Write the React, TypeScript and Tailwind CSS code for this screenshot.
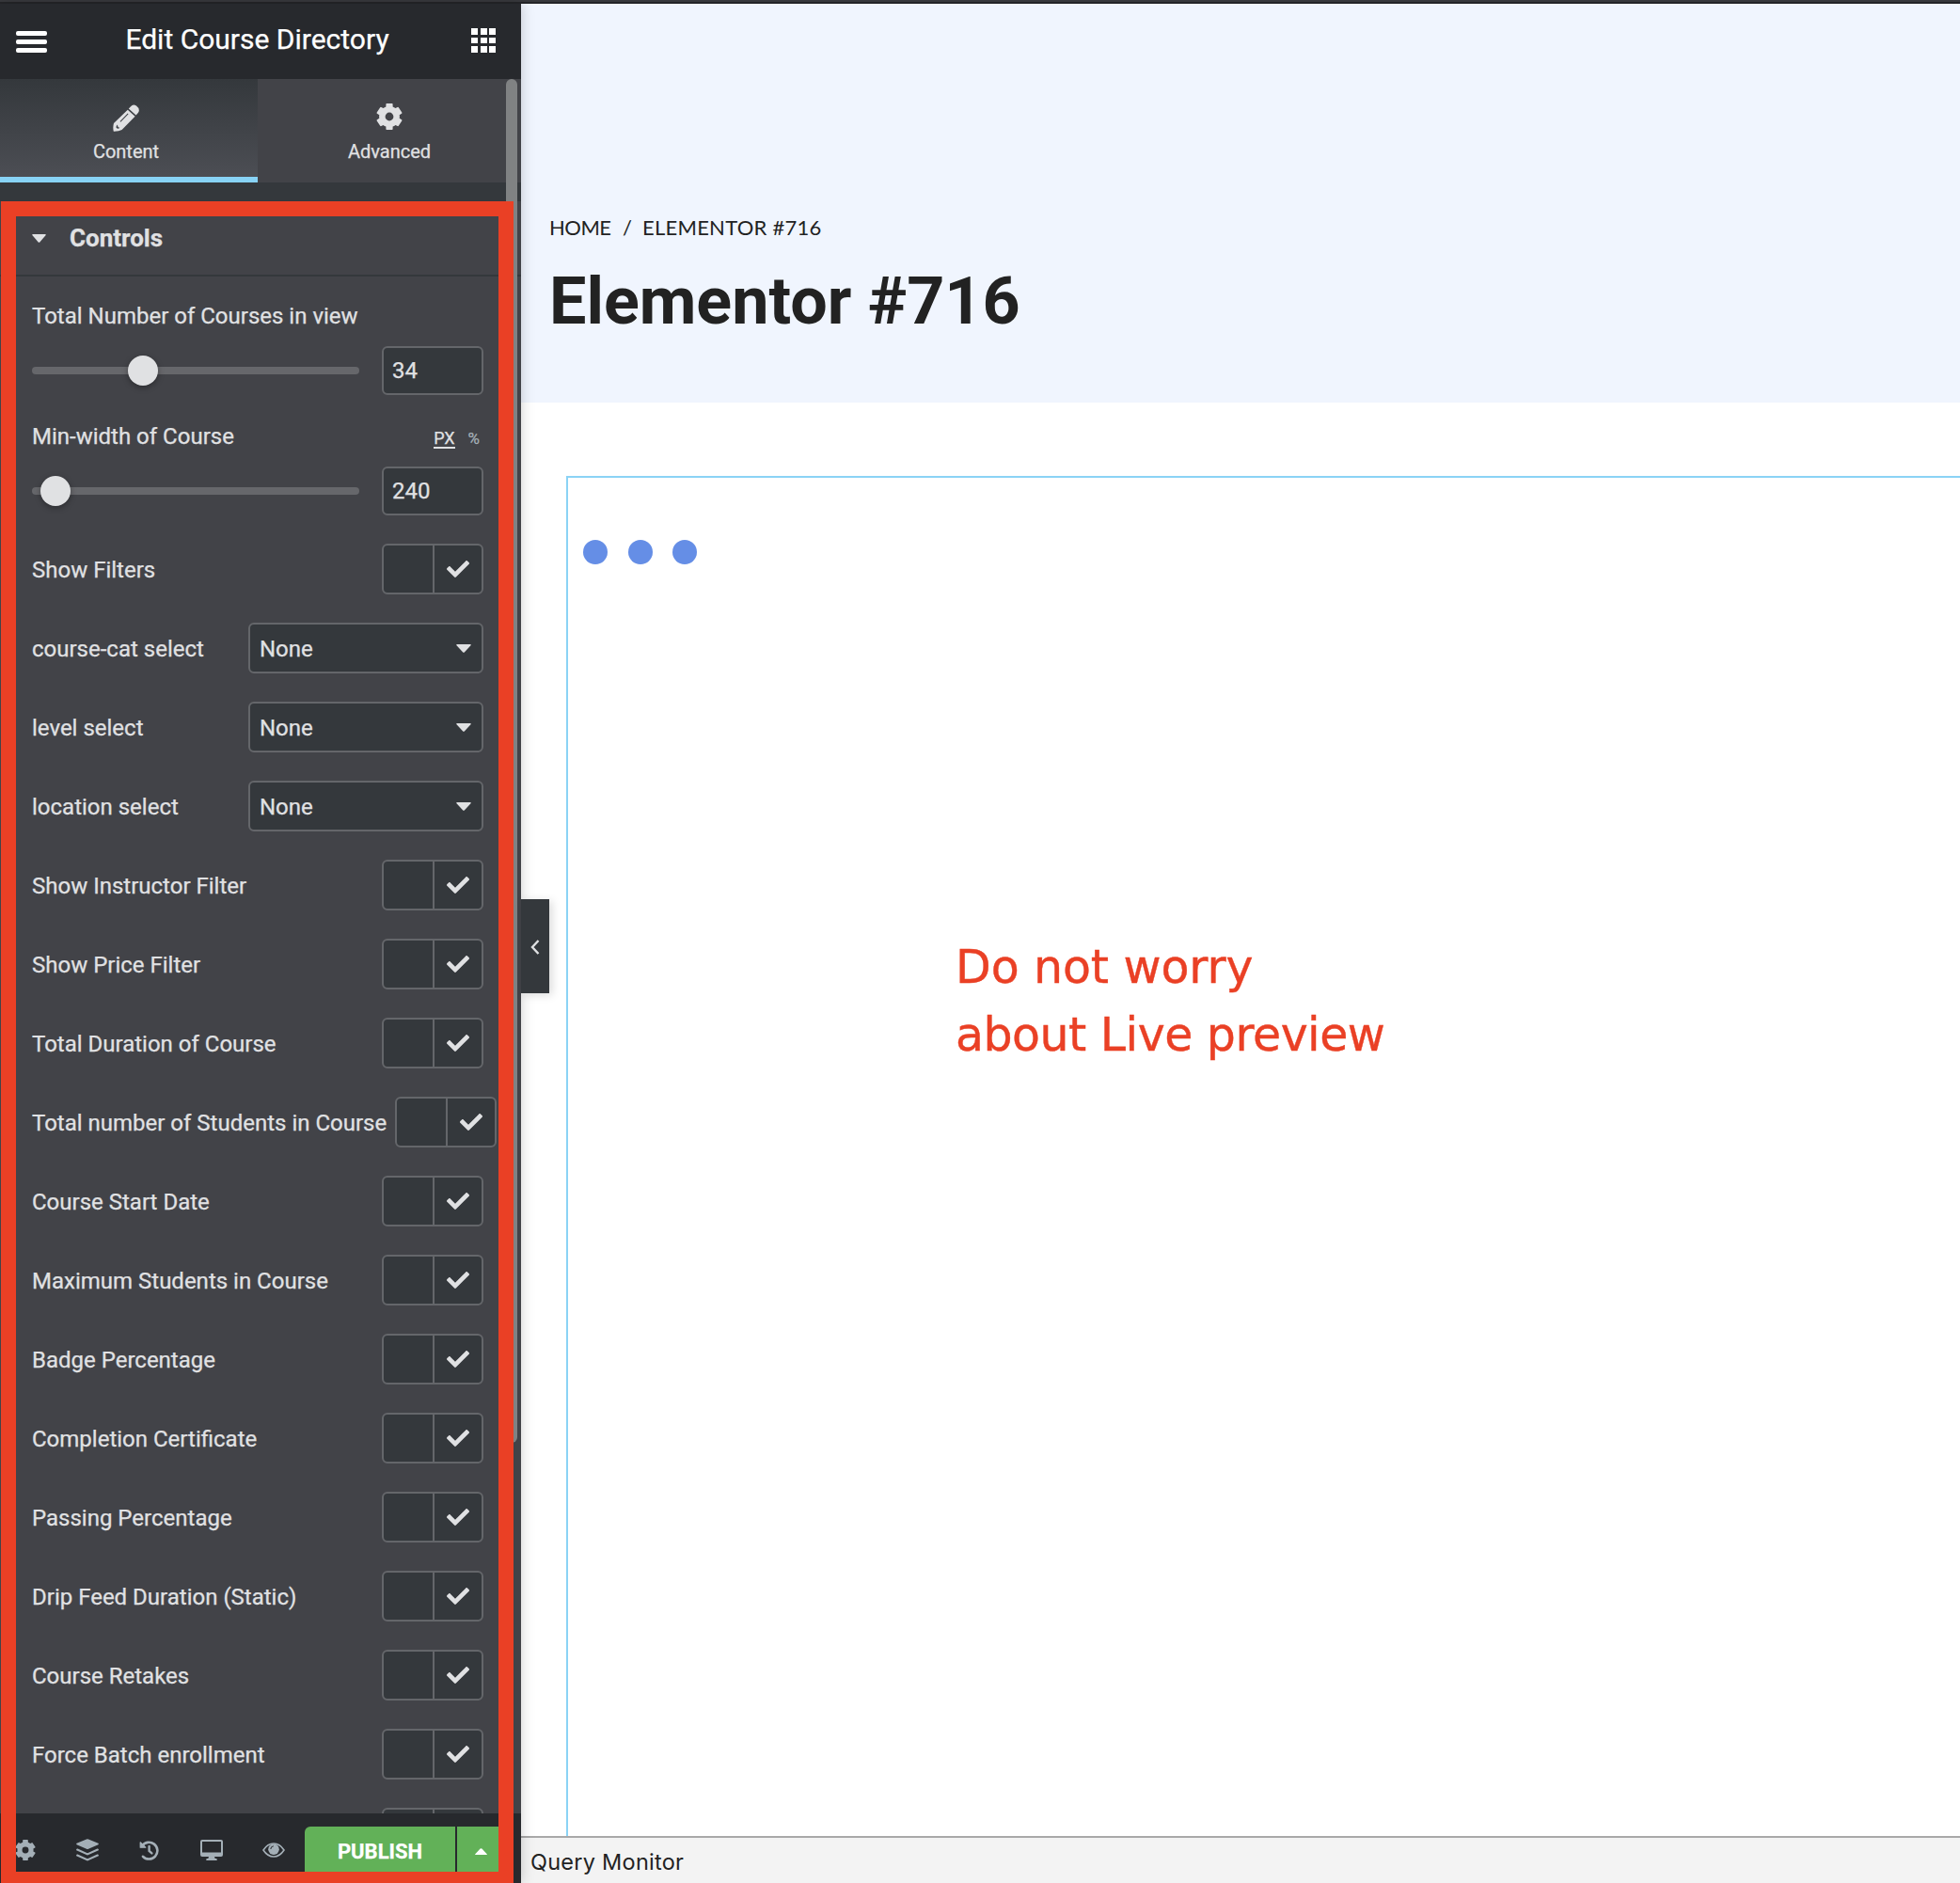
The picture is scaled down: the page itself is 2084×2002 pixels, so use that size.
import React from "react";
import { FaCheck } from "react-icons/fa";

const TOGGLES = [
  "Show Instructor Filter",
  "Show Price Filter",
  "Total Duration of Course",
  "Total number of Students in Course",
  "Course Start Date",
  "Maximum Students in Course",
  "Badge Percentage",
  "Completion Certificate",
  "Passing Percentage",
  "Drip Feed Duration (Static)",
  "Course Retakes",
  "Force Batch enrollment",
  "",
];

function Gear({ className }: { className: string }) {
  return (
    <svg viewBox="0 0 28 28" className={className} fill="currentColor" fillRule="evenodd">
      <path d="M10.4 0.8Q10.4 0 11.2 0H16.8Q17.6 0 17.6 0.8V3.4Q19.2 4.1 20.5 5.1L22.6 4Q23.3 3.6 23.8 4.3L27.3 9.6Q27.7 10.3 27.1 10.8L24.7 12.2Q25.1 14 24.7 15.8L27.1 17.2Q27.7 17.7 27.3 18.4L23.8 23.7Q23.3 24.4 22.6 24L20.5 22.9Q19.2 23.9 17.6 24.6V27.2Q17.6 28 16.8 28H11.2Q10.4 28 10.4 27.2V24.6Q8.8 23.9 7.5 22.9L5.4 24Q4.7 24.4 4.2 23.7L.7 18.4Q.3 17.7 .9 17.2L3.3 15.8Q2.9 14 3.3 12.2L.9 10.8Q.3 10.3 .7 9.6L4.2 4.3Q4.7 3.6 5.4 4L7.5 5.1Q8.8 4.1 10.4 3.4ZM14 9.6A4.4 4.4 0 1 0 14 18.4A4.4 4.4 0 1 0 14 9.6Z" />
    </svg>
  );
}

function Toggle() {
  return (
    <div className="flex h-[54px] w-[108px] shrink-0 overflow-hidden rounded-[6px] border-2 border-[#64666a] bg-[#34383c]">
      <div className="w-[54px] shrink-0 border-r-2 border-[#64666a]" />
      <div className="flex flex-1 items-center justify-center">
        <FaCheck className="h-6 w-6" />
      </div>
    </div>
  );
}

function Row({ label, children }: { label: string; children: React.ReactNode }) {
  return (
    <div className="flex h-[54px] shrink-0 items-center justify-between gap-[9px]">
      <span className="mt-px whitespace-nowrap">{label}</span>
      {children}
    </div>
  );
}

function Slider({ value, left }: { value: string; left: number }) {
  return (
    <div className="flex h-[52px] items-center justify-between">
      <div className="relative h-2 w-[348px] rounded-full bg-[#66676b]">
        <div
          className="absolute -top-3 h-8 w-8 rounded-full bg-[#e0e1e3] shadow-[0_2px_6px_rgba(0,0,0,0.35)]"
          style={{ left }}
        />
      </div>
      <div className="flex h-[52px] w-[108px] items-center rounded-[6px] border-2 border-[#64666a] bg-[#34383c] px-[9px]">
        {value}
      </div>
    </div>
  );
}

function Sidebar() {
  return (
    <aside className="relative z-10 flex w-[554px] shrink-0 flex-col bg-[#34383c] font-['Roboto',sans-serif] text-[#e0e1e3] shadow-[0_0_14px_rgba(0,0,0,0.2)] [-webkit-text-stroke:0.25px_currentColor]">
      <header className="flex h-20 shrink-0 items-center justify-between bg-[#27292d] pr-[27px] pl-[17px] text-white">
        <svg viewBox="0 0 33 23" className="mt-px h-[23px] w-[33px]" fill="currentColor">
          <rect width="33" height="5" rx="2" />
          <rect y="9" width="33" height="5" rx="2" />
          <rect y="18" width="33" height="5" rx="2" />
        </svg>
        <h1 className="-mt-1 -ml-1 text-[30px] leading-10">Edit Course Directory</h1>
        <div className="mt-[-2px] grid grid-cols-3 gap-x-[2.5px] gap-y-[3px]">
          {Array.from({ length: 9 }, (_, i) => (
            <i key={i} className="h-[6.5px] w-[7px] bg-white" />
          ))}
        </div>
      </header>

      <div className="flex h-[110px] shrink-0 text-[20px] leading-6">
        <div className="flex w-[274px] flex-col items-center border-b-[6px] border-[#88d3f6] bg-linear-to-b from-[#34383c] to-[#4c4e54] pt-[27px] pr-1.5">
          <svg viewBox="0 0 28 29" className="h-[29px] w-7" fill="currentColor" fillRule="evenodd">
            <path d="M19 2.2Q21.6-1 25 1.6Q29.4 5 27 8.8L24.6 11.6L16.8 4.6ZM15.8 5.8L23.6 12.800L9.600 27Q6.500 28.800 .8 28.700Q-.3 24.500 1 20ZM15.800 9.600L7.600 18L8.300 18.700L16.500 10.300ZM5 21.400Q3.200 22.600 3.600 24.800Q5.400 26.600 7.400 24.800Q5 24.600 5 21.400Z" />
          </svg>
          <span className="mt-[9px]">Content</span>
        </div>
        <div className="flex flex-1 flex-col items-center bg-[#424348] pt-[26px]">
          <Gear className="h-7 w-7" />
          <span className="mt-[11px]">Advanced</span>
        </div>
      </div>

      <div className="mt-5 flex min-h-0 flex-1 flex-col overflow-hidden bg-[#424348] text-[24px] leading-7">
        <div className="flex h-20 shrink-0 items-center border-b-2 border-[#34383c] pl-[34px]">
          <svg viewBox="0 0 15 9" className="h-[9px] w-[15px]" fill="currentColor">
            <path d="M1 0H14Q15.5 0 14.5 1.2L8.5 8.2Q7.5 9.4 6.5 8.2L.5 1.2Q-.5 0 1 0Z" />
          </svg>
          <h2 className="ml-[25px] text-[26px] font-bold">Controls</h2>
        </div>
        <div className="flex shrink-0 flex-col pr-10 pl-[34px]">
          <div className="mt-7">Total Number of Courses in view</div>
          <div className="mt-[18px]">
            <Slider value="34" left={102} />
          </div>
          <div className="mt-[30px] flex items-center justify-between">
            <span>Min-width of Course</span>
            <span className="mt-1 flex gap-[14px] pr-1 text-[18px] leading-5">
              <span className="border-b-2 border-[#e0e1e3] leading-[19px]">PX</span>
              <span className="text-[17px] text-[#a4afb7]">%</span>
            </span>
          </div>
          <div className="mt-[18px]">
            <Slider value="240" left={9} />
          </div>
          <div className="mt-[30px] flex flex-col gap-[30px]">
            <Row label="Show Filters">
              <Toggle />
            </Row>
            {["course-cat select", "level select", "location select"].map((label) => (
              <Row key={label} label={label}>
                <div className="flex h-[54px] w-[250px] items-center justify-between rounded-[6px] border-2 border-[#64666a] bg-[#34383c] pr-[11px] pl-2.5">
                  <span className="mt-px">None</span>
                  <svg viewBox="0 0 16 9" className="h-[9px] w-4" fill="currentColor">
                    <path d="M1 0H15Q16.5 0 15.5 1.2L9 8.2Q8 9.4 7 8.2L.5 1.2Q-.5 0 1 0Z" />
                  </svg>
                </div>
              </Row>
            ))}
            {TOGGLES.map((label) => (
              <Row key={label} label={label}>
                <Toggle />
              </Row>
            ))}
          </div>
        </div>
      </div>

      <footer className="flex h-[74px] shrink-0 items-start bg-[#27292d] text-[#a4afb7]">
        <div className="flex h-[78px] w-[324px] items-center pl-4">
          <Gear className="h-[22px] w-[22px]" />
          <svg viewBox="0 0 24 24" className="ml-[43px] h-6 w-6" fill="currentColor">
            <path d="M11 .4Q12 0 13 .4L23.4 4.8Q24.4 5.5 23.4 6.2L13 10.8Q12 11.2 11 10.8L.6 6.2Q-.4 5.5 .6 4.8Z" />
            <path d="M1.2 11.6L12 16.4L22.8 11.6M1.2 17.6L12 22.4L22.8 17.6" fill="none" stroke="currentColor" strokeWidth="2.2" strokeLinecap="round" />
          </svg>
          <svg viewBox="0 0 21 21" className="ml-[43px] h-[21px] w-[21px]" fill="none" stroke="currentColor" strokeWidth="2.6">
            <path d="M3 5.8A8.9 8.9 0 1 1 4 16.8" strokeLinecap="round" />
            <path d="M1.2 1.8V7.2H6.8Z" fill="currentColor" strokeWidth="1.2" strokeLinejoin="round" />
            <path d="M10.6 6V11L13.4 13.4" strokeLinecap="round" strokeWidth="2.4" />
          </svg>
          <svg viewBox="0 0 24 22" className="ml-11 h-[22px] w-6" fill="currentColor" fillRule="evenodd">
            <path d="M2 0H22Q24 0 24 2V16Q24 18 22 18H15L15.7 20H17Q17.7 20 17.7 21V22H6.3V21Q6.3 20 7 20H8.3L9 18H2Q0 18 0 16V2Q0 0 2 0ZM2 2V13.4H22V2Z" />
          </svg>
          <svg viewBox="0 0 24 16" className="ml-[42px] h-4 w-6">
            <path d="M1 8Q5.5 1 12 1T23 8Q18.5 15 12 15T1 8Z" fill="none" stroke="currentColor" strokeWidth="1.6" />
            <circle cx="12" cy="7.2" r="5.8" fill="currentColor" />
            <path d="M8.8 7Q8.8 4.1 11.8 3.8" fill="none" stroke="#27292d" strokeWidth="1" />
          </svg>
        </div>
        <div className="mt-[14px] flex h-[60px] flex-1 gap-0.5 text-white">
          <div className="flex w-40 justify-center rounded-tl-[6px] bg-[#62b158] pt-[13px] text-[22px] leading-7 font-bold">
            PUBLISH
          </div>
          <div className="w-[54px] bg-[#62b158] pt-[23px] pl-[19px]">
            <svg viewBox="0 0 13 7" className="h-[7px] w-[13px]" fill="currentColor">
              <path d="M1 7H12Q13.4 7 12.5 6L7.4 .6Q6.5-.3 5.6 .6L.5 6Q-.4 7 1 7Z" />
            </svg>
          </div>
        </div>
      </footer>

      <div className="absolute top-20 left-[538px] h-[1450px] w-3 rounded-full bg-[#808283]" />
      <div className="absolute top-[209.5px] left-px h-[1792px] w-[544.5px] border-16 border-[#ea4025]" />
      <div className="absolute top-[952px] left-[554px] flex h-[100px] w-[30px] items-center justify-center bg-[#34383c] shadow-[3px_2px_10px_rgba(0,0,0,0.15)]">
        <svg viewBox="0 0 10 16" className="mt-px h-4 w-2.5" fill="none" stroke="currentColor" strokeWidth="2.4">
          <path d="M8.5 1L2 8L8.5 15" />
        </svg>
      </div>
    </aside>
  );
}

function Preview() {
  return (
    <main className="relative flex min-w-0 flex-1 flex-col bg-white text-[#222]">
      <section className="h-[424px] shrink-0 bg-[#f0f5fe] pl-[30px]">
        <nav className="flex pt-[222px] font-['Lato',sans-serif] text-[22px] leading-8 whitespace-nowrap">
          <span className="w-[78px] tracking-[-0.5px]">HOME</span>
          <span className="w-[21px]">/</span>
          <span className="tracking-[0.25px]">ELEMENTOR #716</span>
        </nav>
        <h1 className="mt-[17px] font-['Roboto',sans-serif] text-[70px] leading-[90px] font-bold">Elementor #716</h1>
      </section>
      <section className="mt-[78px] ml-12 flex-1 border-t-2 border-l-2 border-[#8bd3f5] pt-[66px] pl-4">
        <div className="flex gap-[21.7px]">
          <i className="h-[26px] w-[26px] rounded-full bg-[#658ee6]" />
          <i className="h-[26px] w-[26px] rounded-full bg-[#658ee6]" />
          <i className="h-[26px] w-[26px] rounded-full bg-[#658ee6]" />
        </div>
        <p className="mt-[393px] ml-[396px] font-['DejaVu_Sans',sans-serif] text-[49px] leading-[72px] whitespace-nowrap text-[#ea4025] [-webkit-text-stroke:0.4px_currentColor]">
          <span className="tracking-[-0.1px]">Do not worry</span>
          <br />
          <span className="tracking-[-0.52px]">about Live preview</span>
        </p>
      </section>
      <footer className="h-[50px] shrink-0 border-t-2 border-[#a9a9a9] bg-[#f3f3f3] pt-2 pl-2.5 font-['Inter',sans-serif] text-[23.5px] leading-9 tracking-[0.25px]">
        Query Monitor
      </footer>
    </main>
  );
}

export default function App() {
  return (
    <div className="flex h-[2002px] w-[2084px] flex-col overflow-hidden">
      <div className="h-1 shrink-0 border-t-2 border-[#38393d] bg-[#242528]" />
      <div className="flex min-h-0 flex-1">
        <Sidebar />
        <Preview />
      </div>
    </div>
  );
}
